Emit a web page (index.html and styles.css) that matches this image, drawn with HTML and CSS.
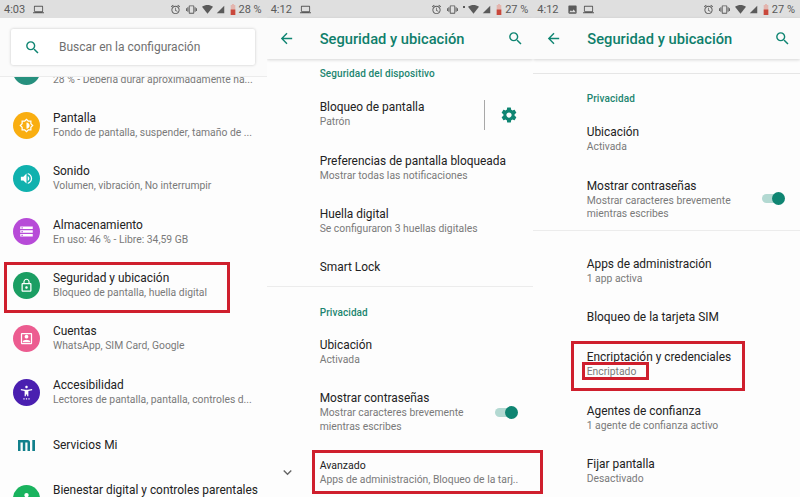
FILE: index.html
```html
<!DOCTYPE html>
<html lang="es">
<head>
    <meta charset="UTF-8">
    <meta name="viewport" content="width=device-width, initial-scale=1.0">
    <title>Seguridad y ubicación</title>
    <link rel="stylesheet" href="styles.css">
</head>
<body>
    <svg class="sprites" aria-hidden="true">
        <symbol id="i-search" viewBox="0 0 24 24"><path d="M15.5 14h-.79l-.28-.27A6.47 6.47 0 0 0 16 9.5 6.5 6.5 0 1 0 9.5 16c1.61 0 3.09-.59 4.23-1.57l.27.28v.79l5 4.99L20.49 19l-4.99-5zm-6 0C7.01 14 5 11.99 5 9.5S7.01 5 9.5 5 14 7.01 14 9.5 11.99 14 9.5 14z"/></symbol>
        <symbol id="i-back" viewBox="0 0 24 24"><path d="M20 11H7.83l5.59-5.59L12 4l-8 8 8 8 1.41-1.41L7.83 13H20v-2z"/></symbol>
        <symbol id="i-gear" viewBox="0 0 24 24"><path d="M19.43 12.98c.04-.32.07-.64.07-.98s-.03-.66-.07-.98l2.11-1.65c.19-.15.24-.42.12-.64l-2-3.46c-.12-.22-.39-.3-.61-.22l-2.49 1c-.52-.4-1.08-.73-1.69-.98l-.38-2.65C14.46 2.18 14.25 2 14 2h-4c-.25 0-.46.18-.49.42l-.38 2.65c-.61.25-1.17.59-1.69.98l-2.49-1c-.23-.09-.49 0-.61.22l-2 3.46c-.13.22-.07.49.12.64l2.11 1.65c-.04.32-.07.65-.07.98s.03.66.07.98l-2.11 1.65c-.19.15-.24.42-.12.64l2 3.46c.12.22.39.3.61.22l2.49-1c.52.4 1.08.73 1.69.98l.38 2.65c.03.24.24.42.49.42h4c.25 0 .46-.18.49-.42l.38-2.65c.61-.25 1.17-.59 1.69-.98l2.49 1c.23.09.49 0 .61-.22l2-3.46c.12-.22.07-.49-.12-.64l-2.11-1.65zM12 15.5c-1.93 0-3.5-1.57-3.5-3.5s1.57-3.5 3.5-3.5 3.5 1.57 3.5 3.5-1.57 3.5-3.5 3.5z"/></symbol>
        <symbol id="i-laptop" viewBox="0 0 24 24"><path d="M20 18c1.1 0 2-.9 2-2V6c0-1.1-.9-2-2-2H4c-1.1 0-2 .9-2 2v10c0 1.1.9 2 2 2H0v2h24v-2h-4zM4 6h16v10H4V6z"/></symbol>
        <symbol id="i-image" viewBox="0 0 24 24"><path d="M21 19V5c0-1.1-.9-2-2-2H5c-1.1 0-2 .9-2 2v14c0 1.1.9 2 2 2h14c1.1 0 2-.9 2-2zM8.5 13.5l2.5 3.01L14.5 12l4.5 6H5l3.5-4.5z"/></symbol>
        <symbol id="i-alarm" viewBox="0 0 24 24"><path d="M22 5.72l-4.6-3.86-1.29 1.53 4.6 3.86L22 5.72zM7.88 3.39L6.6 1.86 2 5.71l1.29 1.53 4.59-3.85zM12.5 8H11v6l4.75 2.85.75-1.23-4-2.37V8zM12 4c-4.97 0-9 4.03-9 9s4.03 9 9 9 9-4.03 9-9-4.03-9-9-9zm0 16c-3.87 0-7-3.13-7-7s3.13-7 7-7 7 3.13 7 7-3.13 7-7 7z"/></symbol>
        <symbol id="i-vibrate" viewBox="0 0 24 24"><path d="M0 15h2V9H0v6zm3 2h2V7H3v10zm19-8v6h2V9h-2zm-3 8h2V7h-2v10zM16.5 3h-9C6.67 3 6 3.67 6 4.5v15c0 .83.67 1.5 1.5 1.5h9c.83 0 1.5-.67 1.5-1.5v-15c0-.83-.67-1.5-1.5-1.5zM16 19H8V5h8v14z"/></symbol>
        <symbol id="i-wifi" viewBox="0 0 24 24"><path d="M12 21L24 6C20 3 16 2 12 2S4 3 0 6z"/></symbol>
        <symbol id="i-signal" viewBox="0 0 24 24"><path d="M2 22h20V2z"/></symbol>
        <symbol id="i-battery" viewBox="0 0 12 24"><path fill="#e3b5ae" d="M4 0h4v2h3v22H1V2h3z"/><path fill="#c9483c" d="M1 12h10v12H1z"/></symbol>
        <symbol id="i-bright" viewBox="0 0 24 24"><path d="M20 8.69V4h-4.69L12 .69 8.69 4H4v4.69L.69 12 4 15.31V20h4.69L12 23.31 15.31 20H20v-4.69L23.31 12 20 8.69zM18 14.5V18h-3.5L12 20.5 9.5 18H6v-3.5L3.5 12 6 9.5V6h3.5L12 3.5 14.5 6H18v3.5l2.500 2.500zM12 7v10c2.760 0 5-2.240 5-5s-2.240-5-5-5z"/></symbol>
        <symbol id="i-volume" viewBox="0 0 24 24"><path d="M3 9v6h4l5 5V4L7 9H3zm13.500 3c0-1.770-1.020-3.290-2.500-4.030v8.050c1.480-.73 2.500-2.250 2.500-4.020zM14 3.230v2.060c2.890.86 5 3.540 5 6.710s-2.110 5.850-5 6.710v2.060c4.010-.91 7-4.490 7-8.770s-2.990-7.860-7-8.770z"/></symbol>
        <symbol id="i-storage" viewBox="0 0 24 24"><path d="M2 20h20v-4H2v4zm2-3h2v2H4v-2zM2 4v4h20V4H2zm4 3H4V5h2v2zm-4 7h20v-4H2v4zm2-3h2v2H4v-2z"/></symbol>
        <symbol id="i-lock" viewBox="0 0 24 24"><path d="M12 17c1.100 0 2-.9 2-2s-.9-2-2-2-2 .9-2 2 .9 2 2 2zm6-9h-1V6c0-2.760-2.240-5-5-5S7 3.240 7 6v2H6c-1.100 0-2 .9-2 2v10c0 1.100.9 2 2 2h12c1.100 0 2-.9 2-2V10c0-1.100-.9-2-2-2zM8.900 6c0-1.710 1.390-3.100 3.100-3.100s3.100 1.390 3.100 3.100v2H8.900V6zM18 20H6V10h12v10z"/></symbol>
        <symbol id="i-account" viewBox="0 0 24 24"><path d="M19 3H5c-1.100 0-2 .9-2 2v14c0 1.100.9 2 2 2h14c1.100 0 2-.9 2-2V5c0-1.100-.9-2-2-2zm0 16H5V5h14v14zM12 12c1.650 0 3-1.350 3-3s-1.350-3-3-3-3 1.350-3 3 1.350 3 3 3zm6 5c0-2-4-3.100-6-3.100S6 15 6 17v1h12v-1z"/></symbol>
        <symbol id="i-access" viewBox="0 0 24 24"><path d="M12 1c1.100 0 2 .9 2 2s-.9 2-2 2-2-.9-2-2 .9-2 2-2zm9 5.500v2l-6 1V18h-2v-3h-2v3H9V9.500l-6-1v-2l7 1h4zM7 21h2v2H7zm4 0h2v2h-2zm4 0h2v2h-2z"/></symbol>
        <symbol id="i-mi" viewBox="0 0 17 11"><path d="M0 0h9.500a2.500 2.500 0 0 1 2.500 2.500V11H9.500V2.500H7.300V11H4.800V2.500H2.500V11H0zM14.300 0H17v11h-2.700z"/></symbol>
        <symbol id="i-people" viewBox="0 0 24 24"><path d="M12 3a3.500 3.500 0 1 1 0 7 3.500 3.500 0 0 1 0-7zM5 20c0-4 3.500-7 7-7s7 3 7 7z"/></symbol>
        <symbol id="i-chevron" viewBox="0 0 24 24"><path d="M16.590 8.590L12 13.170 7.410 8.590 6 10l6 6 6-6z"/></symbol>
    </svg>

    <div class="screens">
        <!-- Ajustes -->
        <section class="phone">
            <div class="status">
                <span class="clock">4:03</span>
                <svg class="st"><use href="#i-laptop"/></svg>
                <span class="status-right">
                    <svg class="st"><use href="#i-alarm"/></svg>
                    <svg class="st"><use href="#i-vibrate"/></svg>
                    <svg class="st"><use href="#i-wifi"/></svg>
                    <svg class="st st-signal"><use href="#i-signal"/></svg>
                    <svg class="st-batt"><use href="#i-battery"/></svg>
                    <span class="pct">28 %</span>
                </span>
            </div>
            <div class="search-area">
                <div class="search-box">
                    <svg class="search-icon"><use href="#i-search"/></svg>
                    <span>Buscar en la configuración</span>
                </div>
            </div>
            <div class="settings">
                <div class="row row-icon row-cut">
                    <span class="circle c-battery"></span>
                    <div class="texts"><p class="sub">28 % - Debería durar aproximadamente ha...</p></div>
                </div>
                <div class="row row-icon">
                    <span class="circle c-display"><svg><use href="#i-bright"/></svg></span>
                    <div class="texts"><p class="title">Pantalla</p><p class="sub">Fondo de pantalla, suspender, tamaño de ...</p></div>
                </div>
                <div class="row row-icon">
                    <span class="circle c-sound"><svg><use href="#i-volume"/></svg></span>
                    <div class="texts"><p class="title">Sonido</p><p class="sub">Volumen, vibración, No interrumpir</p></div>
                </div>
                <div class="row row-icon">
                    <span class="circle c-storage"><svg><use href="#i-storage"/></svg></span>
                    <div class="texts"><p class="title">Almacenamiento</p><p class="sub">En uso: 46 % - Libre: 34,59 GB</p></div>
                </div>
                <div class="row row-icon">
                    <span class="circle c-security"><svg><use href="#i-lock"/></svg></span>
                    <div class="texts"><p class="title">Seguridad y ubicación</p><p class="sub">Bloqueo de pantalla, huella digital</p></div>
                </div>
                <div class="row row-icon">
                    <span class="circle c-accounts"><svg><use href="#i-account"/></svg></span>
                    <div class="texts"><p class="title">Cuentas</p><p class="sub">WhatsApp, SIM Card, Google</p></div>
                </div>
                <div class="row row-icon">
                    <span class="circle c-access"><svg><use href="#i-access"/></svg></span>
                    <div class="texts"><p class="title">Accesibilidad</p><p class="sub">Lectores de pantalla, pantalla, controles d...</p></div>
                </div>
                <div class="row row-icon">
                    <span class="circle c-mi"><svg><use href="#i-mi"/></svg></span>
                    <div class="texts"><p class="title">Servicios Mi</p></div>
                </div>
                <div class="row row-icon row-last">
                    <span class="circle c-wellbeing"><svg><use href="#i-people"/></svg></span>
                    <div class="texts"><p class="title">Bienestar digital y controles parentales</p></div>
                </div>
            </div>
        </section>

        <!-- Seguridad y ubicacion -->
        <section class="phone">
            <div class="status">
                <span class="clock">4:12</span>
                <svg class="st"><use href="#i-laptop"/></svg>
                <span class="status-right">
                    <svg class="st"><use href="#i-alarm"/></svg>
                    <svg class="st"><use href="#i-vibrate"/></svg>
                    <span class="wifi-up"></span>
                    <svg class="st"><use href="#i-wifi"/></svg>
                    <svg class="st st-signal"><use href="#i-signal"/></svg>
                    <svg class="st-batt"><use href="#i-battery"/></svg>
                    <span class="pct">27 %</span>
                </span>
            </div>
            <div class="appbar">
                <svg class="bar-icon"><use href="#i-back"/></svg>
                <h1>Seguridad y ubicación</h1>
                <svg class="bar-icon"><use href="#i-search"/></svg>
            </div>
            <div class="section section-first">Seguridad del dispositivo</div>
            <div class="row">
                <div class="texts"><p class="title">Bloqueo de pantalla</p><p class="sub">Patrón</p></div>
                <span class="row-action">
                    <svg class="gear"><use href="#i-gear"/></svg>
                </span>
            </div>
            <div class="row">
                <div class="texts"><p class="title">Preferencias de pantalla bloqueada</p><p class="sub">Mostrar todas las notificaciones</p></div>
            </div>
            <div class="row">
                <div class="texts"><p class="title">Huella digital</p><p class="sub">Se configuraron 3 huellas digitales</p></div>
            </div>
            <div class="row row-short row-line">
                <div class="texts"><p class="title">Smart Lock</p></div>
            </div>
            <div class="section">Privacidad</div>
            <div class="row">
                <div class="texts"><p class="title">Ubicación</p><p class="sub">Activada</p></div>
            </div>
            <div class="row row-tall">
                <div class="texts"><p class="title">Mostrar contraseñas</p><p class="sub">Mostrar caracteres brevemente<br>mientras escribes</p></div>
                <span class="switch"></span>
            </div>
            <div class="row">
                <svg class="chevron"><use href="#i-chevron"/></svg>
                <div class="texts"><p class="title title-small">Avanzado</p><p class="sub">Apps de administración, Bloqueo de la tarj..</p></div>
            </div>
        </section>

        <!-- Seguridad y ubicacion, avanzado -->
        <section class="phone phone-advanced">
            <div class="status">
                <span class="clock">4:12</span>
                <svg class="st"><use href="#i-image"/></svg>
                <svg class="st"><use href="#i-laptop"/></svg>
                <span class="status-right">
                    <svg class="st"><use href="#i-alarm"/></svg>
                    <svg class="st"><use href="#i-vibrate"/></svg>
                    <svg class="st"><use href="#i-wifi"/></svg>
                    <svg class="st st-signal"><use href="#i-signal"/></svg>
                    <svg class="st-batt"><use href="#i-battery"/></svg>
                    <span class="pct">27 %</span>
                </span>
            </div>
            <div class="appbar">
                <svg class="bar-icon"><use href="#i-back"/></svg>
                <h1>Seguridad y ubicación</h1>
                <svg class="bar-icon"><use href="#i-search"/></svg>
            </div>
            <div class="spacer-line"></div>
            <div class="section section-privacy">Privacidad</div>
            <div class="row">
                <div class="texts"><p class="title">Ubicación</p><p class="sub">Activada</p></div>
            </div>
            <div class="row row-tall row-line">
                <div class="texts"><p class="title">Mostrar contraseñas</p><p class="sub">Mostrar caracteres brevemente<br>mientras escribes</p></div>
                <span class="switch"></span>
            </div>
            <div class="row group-start">
                <div class="texts"><p class="title">Apps de administración</p><p class="sub">1 app activa</p></div>
            </div>
            <div class="row row-short">
                <div class="texts"><p class="title">Bloqueo de la tarjeta SIM</p></div>
            </div>
            <div class="row">
                <div class="texts"><p class="title">Encriptación y credenciales</p><p class="sub">Encriptado</p></div>
            </div>
            <div class="row">
                <div class="texts"><p class="title">Agentes de confianza</p><p class="sub">1 agente de confianza activo</p></div>
            </div>
            <div class="row">
                <div class="texts"><p class="title">Fijar pantalla</p><p class="sub">Desactivado</p></div>
            </div>
        </section>

        <!-- recuadros rojos encima de las capturas -->
        <div class="mark mark-security"></div>
        <div class="mark mark-advanced"></div>
        <div class="mark mark-encrypt"></div>
        <div class="mark mark-encrypted"></div>
    </div>
</body>
</html>
```

FILE: styles.css
```css
/* Documento */
body {
    margin: 0;
    font-family: Roboto, "Liberation Sans", sans-serif;
    background-color: #fdfdfd;
    color: #222;
}
p, h1 {
    margin: 0;
    font-weight: normal;
}
.sprites {
    display: none;
}
.screens {
    position: relative;
    display: flex;
    width: 800px;
    height: 497px;
    overflow: hidden;
}
.phone {
    flex: 1;
    min-width: 0;
    height: 497px;
    overflow: hidden;
    background-color: #fdfdfd;
}

/* Barra de estado */
.status {
    display: flex;
    align-items: center;
    gap: 5px;
    height: 18px;
    padding: 0 5px 0 4px;
    background-color: #dfdfdf;
    color: #5a5a5a;
    font-size: 11px;
}
.clock {
    margin-right: 3px;
}
.status-right {
    display: flex;
    align-items: center;
    gap: 5px;
    margin-left: auto;
}
.st {
    width: 11px;
    height: 11px;
    fill: #5a5a5a;
}
.st-signal {
    margin-left: -2px;
    width: 9px;
    height: 9px;
}
.st-batt {
    width: 6px;
    height: 11px;
}
.pct {
    margin-left: -2px;
}
.wifi-up {
    width: 2px;
    height: 2px;
    margin: -4px -2px 0 0;
    background-color: #5a5a5a;
}

/* Busqueda */
.search-area {
    position: relative;
    z-index: 1;
    height: 59px;
    padding: 11px 12px 0 11px;
    box-sizing: border-box;
    background-color: #fbfbfb;
    border-bottom: 1px solid #ececec;
}
.search-box {
    display: flex;
    align-items: center;
    height: 36px;
    background-color: #fff;
    border-radius: 2px;
    box-shadow: 0 0 3px rgba(0, 0, 0, 0.22);
    color: #707070;
    font-size: 12px;
}
.search-icon {
    width: 17px;
    height: 17px;
    margin: 0 18px 0 13px;
    fill: #0f8572;
}

/* Cabecera */
.appbar {
    position: relative;
    z-index: 1;
    display: flex;
    align-items: center;
    height: 41px;
    padding: 0 9px 0 11px;
    background-color: #fbfbfb;
    box-shadow: 0 1px 3px rgba(0, 0, 0, 0.16);
}
.appbar h1 {
    flex: 1;
    margin: 1px 0 0 25px;
    font-size: 14.7px;
    font-weight: 500;
    color: #0f7f6b;
}
.bar-icon {
    width: 17px;
    height: 17px;
    fill: #0f8572;
}
.phone-advanced .appbar {
    padding-left: 12px;
}

/* Filas */
.settings {
    margin-top: -32px;
}
.row {
    position: relative;
    display: flex;
    align-items: center;
    box-sizing: border-box;
    height: 53.4px;
    padding: 0 18px 0 53px;
}
.row-icon {
    padding-left: 13px;
}
.row-short {
    height: 39px;
}
.row-tall {
    height: 67px;
}
.row-line {
    border-bottom: 1px solid #ececec;
}
.row-cut .texts {
    margin-top: 16px;
}
.row-last {
    align-items: flex-start;
}
.group-start {
    margin-top: 13px;
}
.texts {
    min-width: 0;
    white-space: nowrap;
}
.title {
    font-size: 11.9px;
    line-height: 15px;
    color: #222;
}
.title-small {
    font-size: 10.5px;
}
.sub {
    font-size: 10.35px;
    line-height: 13.5px;
    color: #7a7a7a;
}
.section {
    display: flex;
    align-items: center;
    height: 38px;
    padding: 12px 0 0 53px;
    box-sizing: border-box;
    font-size: 10px;
    font-weight: 500;
    color: #1c8570;
    letter-spacing: 0.1px;
}
.section-first {
    height: 29px;
    padding-top: 0;
}
.section-privacy {
    height: 39px;
    padding-top: 10px;
}
.spacer-line {
    height: 15px;
    box-sizing: border-box;
    border-bottom: 1px solid #e6e6e6;
}
.phone-advanced .row, .phone-advanced .section {
    padding-left: 53.4px;
}
.phone-advanced .row-short {
    height: 40px;
}
.phone-advanced .row-tall {
    height: 65px;
}
.phone-advanced .row-tall .texts {
    margin-top: 3px;
}

/* Iconos de ajustes */
.circle {
    display: flex;
    align-items: center;
    justify-content: center;
    flex: none;
    width: 27px;
    height: 27px;
    margin-right: 13px;
    border-radius: 50%;
}
.circle svg {
    width: 15px;
    height: 15px;
    fill: #fff;
}
.row-last .circle {
    margin-top: 13px;
}
.row-last .texts {
    margin-top: 11px;
}
.c-battery { background-color: #26907e; }
.c-display { background-color: #f9ae11; }
.c-sound { background-color: #10b1ae; }
.c-storage { background-color: #b74bd8; }
.c-security { background-color: #1b9e63; }
.c-accounts { background-color: #ec5c90; }
.c-access { background-color: #4a1fb0; }
.c-wellbeing { background-color: #19b35e; }
.c-mi svg {
    width: 17px;
    height: 11px;
    fill: #12808c;
}

/* Controles */
.row-action {
    display: flex;
    align-items: center;
    height: 30px;
    margin-left: auto;
    margin-right: -3px;
    padding-left: 15px;
    border-left: 1px solid #a8a8a8;
}
.gear {
    width: 18px;
    height: 18px;
    fill: #0f8572;
}
.switch {
    position: relative;
    width: 20px;
    height: 9px;
    margin-left: auto;
    border-radius: 5px;
    background-color: #b3d9d2;
}
.switch::after {
    content: "";
    position: absolute;
    top: -2px;
    right: -3px;
    width: 13px;
    height: 13px;
    border-radius: 50%;
    background-color: #0f8572;
}
.chevron {
    position: absolute;
    left: 12px;
    top: 18px;
    width: 17px;
    height: 17px;
    fill: #666;
}

/* Recuadros rojos */
.mark {
    position: absolute;
    box-sizing: border-box;
    border: 3px solid #cf1f2d;
}
.mark-security {
    left: 4px;
    top: 262px;
    width: 226px;
    height: 51px;
}
.mark-advanced {
    left: 312px;
    top: 450px;
    width: 231px;
    height: 44px;
}
.mark-encrypt {
    left: 571px;
    top: 341px;
    width: 174px;
    height: 50px;
}
.mark-encrypted {
    left: 582px;
    top: 362px;
    width: 67px;
    height: 18px;
}
```
